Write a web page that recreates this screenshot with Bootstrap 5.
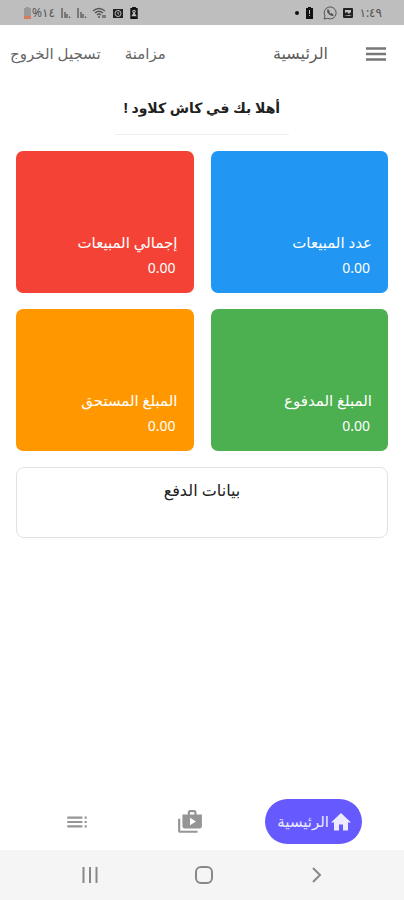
<!DOCTYPE html>
<html lang="ar" dir="rtl">
<head>
<meta charset="utf-8">
<meta name="viewport" content="width=device-width, initial-scale=1">
<title>كاش كلاود</title>
<link href="https://cdn.jsdelivr.net/npm/bootstrap@5.3.0/dist/css/bootstrap.min.css" rel="stylesheet">
<style>
body { font-family: "Noto Sans", "DejaVu Sans", sans-serif; font-size: 16px; line-height: 24px; color: #212121; background: #fff; }
svg { display: block; flex: none; }
.status-bar { height: 25px; background: #bebebe; color: #555; font-size: 12px; padding: 0 22px; }
.status-icons { gap: 5px; }
.app-bar { height: 56px; padding: 0 18px 0 10px; color: #5c5c5c; }
.app-bar .btn { color: #666; font-size: 15px; line-height: 24px; }
.app-title { font-size: 16px; line-height: 24px; margin-inline-start: 38px; }
.greeting { font-size: 14px; line-height: 24px; padding: 15px 9px 14px; border-bottom: 1px solid #eee; }
.page-pad { padding: 0 16px; }
.tiles { --bs-gutter-x: 17px; --bs-gutter-y: 16px; }
.tile { min-height: 142px; border-radius: 7px; padding: 0 16px 13px; color: #fff; }
.tile h2 { font-size: 15px; line-height: 28px; }
.tile p { font-size: 14px; line-height: 24px; padding: 0 2px; }
.tile-blue { background: #2196f3; }
.tile-red { background: #f44336; }
.tile-green { background: #4caf50; }
.tile-orange { background: #ff9800; }
.pay-box { min-height: 71px; border: 1px solid #e2e2e2; border-radius: 8px; padding-top: 10px; }
.pay-box h2 { font-size: 16px; line-height: 24px; }
.tab-bar { padding: 0 42px 6px 64px; color: #959595; }
.tab-bar .btn { color: #959595; }
.tab-bar .tab-home { background: #6659fd; color: #ebeaff; height: 45px; font-size: 15px; padding: 0 9px 0 12px; }
.sys-bar { height: 50px; background: #f5f5f5; padding: 0 80px; }
</style>
</head>
<body>
<div class="d-flex flex-column min-vh-100">
  <div class="status-bar d-flex align-items-center justify-content-between">
    <div class="status-icons d-flex align-items-center">
      <span>١:٤٩</span>
      <svg width="12" height="12" viewBox="0 0 12 12"><path fill="#222" fill-rule="evenodd" d="M2 1h8q1 0 1 1v8q0 1-1 1H2q-1 0-1-1V2q0-1 1-1zM3 3v3l2-1 2 2 2-2V3zM2 9h8L7 8z"/></svg>
      <svg width="14" height="14" viewBox="0 0 14 14" fill="none" stroke="#555"><path d="M1 13l1-3a6 6 0 1 1 2.500 2.300z"/><path stroke-width="1.300" d="M5 4q-1 2 1.500 4T10 9l-1.500-1.200-1 .7-2-2 .6-.9z"/></svg>
      <svg width="13" height="12" viewBox="0 0 13 12"><path fill="#111" fill-rule="evenodd" d="M3 0h3v1h2v11H1V1h2zM4 3v4h1V3zM4 8v1h1V8z"/></svg>
      <svg width="10" height="12" viewBox="0 0 10 12"><circle cx="7" cy="6" r="2" fill="#111"/></svg>
    </div>
    <div class="status-icons d-flex align-items-center">
      <svg width="10" height="12" viewBox="0 0 10 13"><path fill="#111" fill-rule="evenodd" d="M3 0h4v1h2v12H1V1h2zM5 3a2 2 0 0 0-2 2l1 2-2 3h6L6 7l1-2a2 2 0 0 0-2-2zm0 1 1 1-1 1-1-1z"/></svg>
      <svg width="12" height="12" viewBox="0 0 12 12"><path fill="#222" d="M1 2h10v9H1z"/><circle cx="6" cy="6.500" r="3" fill="none" stroke="#bebebe"/><path d="M6 5v2h1" stroke="#bebebe" fill="none"/></svg>
      <svg width="15" height="12" viewBox="0 0 15 12" fill="none" stroke="#555" stroke-width="1.300"><path d="M1 4q6-5 12 0M3 6q4-3.500 8 0M5 8q2-2 4 0M11 8v3M13 8v3"/><circle cx="7" cy="10" r="1" fill="#555" stroke="none"/></svg>
      <svg width="11" height="12" viewBox="0 0 11 12" fill="none" stroke="#555" stroke-width="1.300"><path d="M2 1v10M5 5v6M7 7v4M9.500 9.500v1.500"/></svg>
      <svg width="11" height="12" viewBox="0 0 11 12" fill="none" stroke="#555" stroke-width="1.300"><path d="M2 1v10M5 5v6M7 7v4M9.500 9.500v1.500"/></svg>
      <div class="d-flex align-items-center"><span dir="ltr">%١٤</span>
      <svg width="10" height="12" viewBox="0 0 10 12"><path fill="#999" d="M4 0h3v1h2v8H2V1h2z"/><path fill="#d6795f" d="M2 9h7v3H2z"/></svg></div>
    </div>
  </div>

  <header class="app-bar d-flex align-items-center">
    <button type="button" class="btn border-0 p-0" aria-label="القائمة">
      <svg width="20" height="20" viewBox="0 0 20 20"><path stroke="#777" stroke-width="2.600" d="M0 5.500h20M0 11h20M0 16.500h20"/></svg>
    </button>
    <h1 class="app-title fw-normal mb-0">الرئيسية</h1>
    <div class="d-flex gap-4 me-auto">
      <button type="button" class="btn border-0 p-0">مزامنة</button>
      <button type="button" class="btn border-0 p-0">تسجيل الخروج</button>
    </div>
  </header>

  <main class="page-pad flex-grow-1">
    <div class="d-flex justify-content-center mb-3">
      <div class="greeting fw-bold text-center">أهلا بك في كاش كلاود !</div>
    </div>
    <div class="row row-cols-2 tiles">
      <div class="col"><section class="tile tile-blue d-flex flex-column justify-content-end"><h2 class="fw-normal mb-0">عدد المبيعات</h2><p class="mb-0">0.00</p></section></div>
      <div class="col"><section class="tile tile-red d-flex flex-column justify-content-end"><h2 class="fw-normal mb-0">إجمالي المبيعات</h2><p class="mb-0">0.00</p></section></div>
      <div class="col"><section class="tile tile-green d-flex flex-column justify-content-end"><h2 class="fw-normal mb-0">المبلغ المدفوع</h2><p class="mb-0">0.00</p></section></div>
      <div class="col"><section class="tile tile-orange d-flex flex-column justify-content-end"><h2 class="fw-normal mb-0">المبلغ المستحق</h2><p class="mb-0">0.00</p></section></div>
    </div>
    <section class="pay-box text-center mt-3"><h2 class="mb-0">بيانات الدفع</h2></section>
  </main>

  <nav class="tab-bar d-flex align-items-center justify-content-between" aria-label="التنقل">
    <button type="button" class="btn tab-home rounded-pill border-0 d-flex align-items-center" aria-current="page">
      <svg width="24" height="24" viewBox="0 0 24 24"><path fill="currentColor" d="M10 20.500v-6h4v6h5v-8h3L12 3 2 12.500h3v8z"/></svg>
      <span>الرئيسية</span>
    </button>
    <button type="button" class="btn border-0 p-0" aria-label="المبيعات">
      <svg width="26" height="26" viewBox="0 0 24 24"><path fill="currentColor" d="M3 9H1v11c0 1.110.89 2 2 2h16v-2H3V9zm15-4V3c0-1.110-.89-2-2-2h-4c-1.110 0-2 .89-2 2v2H5v11c0 1.110.89 2 2 2h14c1.110 0 2-.89 2-2V5h-5zm-6-2h4v2h-4V3zm0 12V8l5.500 3.500L12 15z"/></svg>
    </button>
    <button type="button" class="btn border-0 p-0 me-4" aria-label="القائمة التفصيلية">
      <svg width="26" height="26" viewBox="0 0 24 24"><path fill="currentColor" d="M3 9h14V7H3v2zm0 4h14v-2H3v2zm0 4h14v-2H3v2zm16 0h2v-2h-2v2zm0-10v2h2V7h-2zm0 6h2v-2h-2v2z"/></svg>
    </button>
  </nav>

  <div class="sys-bar d-flex align-items-center justify-content-between">
    <button type="button" class="btn border-0 p-0" aria-label="رجوع"><svg width="16" height="20" viewBox="0 0 16 20" fill="none" stroke="#888" stroke-width="2"><path d="M5 3l7 7-7 7"/></svg></button>
    <button type="button" class="btn border-0 p-0" aria-label="الشاشة الرئيسية"><svg width="20" height="20" viewBox="0 0 20 20" fill="none" stroke="#888" stroke-width="2"><rect x="2" y="2" width="16" height="16" rx="5"/></svg></button>
    <button type="button" class="btn border-0 p-0" aria-label="التطبيقات الأخيرة"><svg width="20" height="20" viewBox="0 0 20 20" stroke="#888" stroke-width="2"><path d="M3.500 2v16M10 2v16M16.500 2v16"/></svg></button>
  </div>
</div>
<script src="https://cdn.jsdelivr.net/npm/bootstrap@5.3.0/dist/js/bootstrap.bundle.min.js"></script>
</body>
</html>
